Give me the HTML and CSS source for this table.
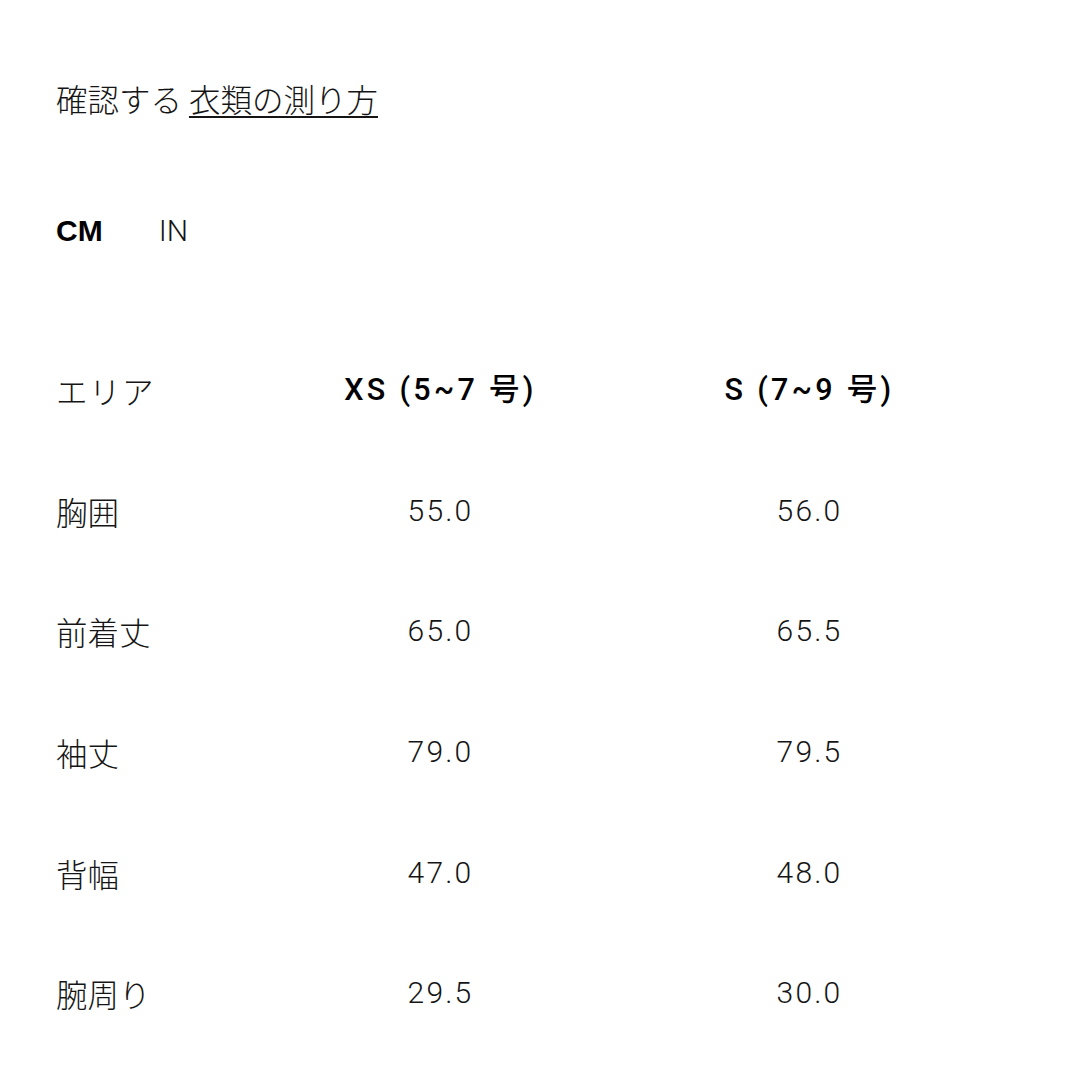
FILE: index.html
```html
<!DOCTYPE html>
<html lang="ja">
<head>
<meta charset="utf-8">
<link rel="stylesheet" href="styles.css">
</head>
<body>
<div class="page">
  <p class="title">確認する <a class="link" href="#">衣類の測り方</a></p>
  <div class="units">
    <span class="unit active">CM</span>
    <span class="unit">IN</span>
  </div>
  <div class="table">
    <div class="row head">
      <div class="cell label">エリア</div>
      <div class="cell val">XS (5~7 号)</div>
      <div class="cell val">S (7~9 号)</div>
    </div>
    <div class="row">
      <div class="cell label">胸囲</div>
      <div class="cell val">55.0</div>
      <div class="cell val">56.0</div>
    </div>
    <div class="row">
      <div class="cell label">前着丈</div>
      <div class="cell val">65.0</div>
      <div class="cell val">65.5</div>
    </div>
    <div class="row">
      <div class="cell label">袖丈</div>
      <div class="cell val">79.0</div>
      <div class="cell val">79.5</div>
    </div>
    <div class="row">
      <div class="cell label">背幅</div>
      <div class="cell val">47.0</div>
      <div class="cell val">48.0</div>
    </div>
    <div class="row">
      <div class="cell label">腕周り</div>
      <div class="cell val">29.5</div>
      <div class="cell val">30.0</div>
    </div>
  </div>
</div>
</body>
</html>
```
FILE: styles.css
```css
html, body {
  margin: 0;
  padding: 0;
  background: #ffffff;
}
body {
  color: #151515;
  font-family: Roboto, "Noto Sans CJK JP", sans-serif;
  font-weight: 300;
  font-size: 30px;
}
.page {
  padding: 78px 56px 0;
}
.title {
  margin: 0;
  line-height: 40px;
  height: 40px;
  font-family: "Noto Sans CJK JP", sans-serif;
  font-weight: 300;
  font-size: 31.5px;
}
.link {
  color: inherit;
  text-decoration: underline;
  text-decoration-thickness: 2px;
  text-underline-offset: 4px;
}
.units {
  margin-top: 93px;
  height: 40px;
  line-height: 40px;
  display: flex;
  gap: 56px;
}
.unit {
  font-family: Roboto, sans-serif;
  font-weight: 300;
}
.unit.active {
  font-family: "Liberation Sans", Arial, sans-serif;
  font-weight: 700;
  color: #000;
}
.table {
  margin-top: 79px;
}
.row {
  display: grid;
  grid-template-columns: 200px 369px 369px;
  height: 120.6px;
  align-items: center;
}
.cell {
  line-height: 40px;
}
.label {
  font-family: "Noto Sans CJK JP", sans-serif;
  font-weight: 300;
  font-size: 31.5px;
}
.head .label {
  letter-spacing: 1.5px;
}
.val {
  text-align: center;
  letter-spacing: 2.2px;
}
.head .val {
  font-family: Roboto, "Noto Sans CJK JP", sans-serif;
  font-weight: 500;
  font-size: 30.5px;
  letter-spacing: 3.3px;
  color: #000;
}
```
